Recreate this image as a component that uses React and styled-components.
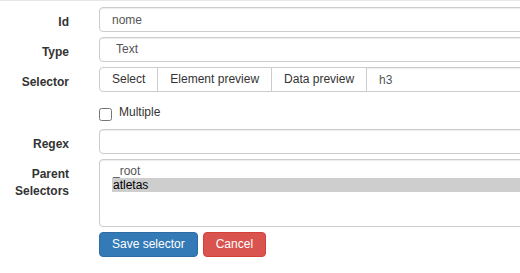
import React from "react";
import styled, { createGlobalStyle } from "styled-components";

const Global = createGlobalStyle`
  html, body { margin: 0; padding: 0; overflow: hidden; background: #fff; }
  body {
    font-family: "Liberation Sans", Arial, Helvetica, sans-serif;
    font-size: 12px;
    line-height: 1.42857;
    color: #333;
  }
  * { box-sizing: border-box; }
`;

const Page = styled.div`
  width: 520px;
  overflow: hidden;
  border-top: 1px solid #e7e7e7;
  padding-top: 6px;
`;

const Form = styled.form`
  display: grid;
  grid-template-columns: 84px 560px;
  column-gap: 15px;
  row-gap: 5px;
  margin: 0;
`;

const Label = styled.label`
  display: block;
  padding-top: 7px;
  padding-right: 15px;
  text-align: right;
  font-weight: bold;
  color: #333;
  line-height: 17px;
`;

const controlBase = `
  display: block;
  width: 100%;
  height: 25px;
  padding: 3px 12px;
  font-family: "Liberation Sans", Arial, Helvetica, sans-serif;
  font-size: 12px;
  line-height: 17px;
  color: #555;
  background: #fff;
  border: 1px solid #ccc;
  border-radius: 4px;
  box-shadow: inset 0 1px 1px rgba(0,0,0,0.075);
  outline: none;
  margin: 0;
`;

const TextInput = styled.input`
  ${controlBase}
`;

const Select = styled.select`
  ${controlBase}
  appearance: none;
  padding-left: 16px;
`;

const InputGroup = styled.div`
  display: flex;
  width: 100%;
`;

const GroupButton = styled.button`
  flex: none;
  height: 25px;
  padding: 3px 12px;
  margin: 0 0 0 ${(p) => (p.$first ? "0" : "-1px")};
  font-family: "Liberation Sans", Arial, Helvetica, sans-serif;
  font-size: 12px;
  line-height: 17px;
  color: #333;
  background: #fff;
  border: 1px solid #ccc;
  border-radius: ${(p) => (p.$first ? "4px 0 0 4px" : "0")};
  white-space: nowrap;
  cursor: pointer;
`;

const GroupInput = styled.input`
  ${controlBase}
  flex: 1;
  margin-left: -1px;
  border-radius: 0 4px 4px 0;
`;

const CheckRow = styled.div`
  min-height: 27px;
  padding-top: 7px;
`;

const CheckLabel = styled.label`
  position: relative;
  display: block;
  padding-left: 20px;
  line-height: 17px;
  font-weight: normal;
  color: #333;
`;

const Check = styled.input`
  position: absolute;
  left: 0;
  top: 4px;
  width: 13px;
  height: 13px;
  margin: 0;
`;

const ListBox = styled.div`
  height: 68px;
  padding: 4px 0 6px 12px;
  border: 1px solid #ccc;
  border-radius: 4px;
  box-shadow: inset 0 1px 1px rgba(0,0,0,0.075);
  background: #fff;
`;

const Option = styled.div`
  height: 14px;
  line-height: 14px;
  padding-left: 1px;
  color: ${(p) => (p.$selected ? "#000" : "#555")};
  background: ${(p) => (p.$selected ? "#cecece" : "transparent")};
  white-space: nowrap;
`;

const Buttons = styled.div`
  display: flex;
  gap: 5px;
`;

const ActionButton = styled.button`
  height: 25px;
  padding: 3px 12px;
  font-family: "Liberation Sans", Arial, Helvetica, sans-serif;
  font-size: 12px;
  line-height: 17px;
  color: #fff;
  border: 1px solid ${(p) => (p.$variant === "danger" ? "#d43f3a" : "#2e6da4")};
  background: ${(p) => (p.$variant === "danger" ? "#d9534f" : "#337ab7")};
  border-radius: 4px;
  white-space: nowrap;
  cursor: pointer;
`;

const Empty = styled.div``;

export default function App() {
  return (
    <>
      <Global />
      <Page>
        <Form onSubmit={(e) => e.preventDefault()}>
          <Label>Id</Label>
          <TextInput readOnly value="nome" />

          <Label>Type</Label>
          <Select defaultValue="Text">
            <option>Text</option>
          </Select>

          <Label>Selector</Label>
          <InputGroup>
            <GroupButton type="button" $first>Select</GroupButton>
            <GroupButton type="button">Element preview</GroupButton>
            <GroupButton type="button">Data preview</GroupButton>
            <GroupInput readOnly value="h3" />
          </InputGroup>

          <Empty />
          <CheckRow>
            <CheckLabel>
              <Check type="checkbox" />
              Multiple
            </CheckLabel>
          </CheckRow>

          <Label>Regex</Label>
          <TextInput readOnly value="" />

          <Label>
            Parent
            <br />
            Selectors
          </Label>
          <ListBox role="listbox">
            <Option>_root</Option>
            <Option $selected>atletas</Option>
          </ListBox>

          <Empty />
          <Buttons>
            <ActionButton type="button">Save selector</ActionButton>
            <ActionButton type="button" $variant="danger">Cancel</ActionButton>
          </Buttons>
        </Form>
      </Page>
    </>
  );
}
